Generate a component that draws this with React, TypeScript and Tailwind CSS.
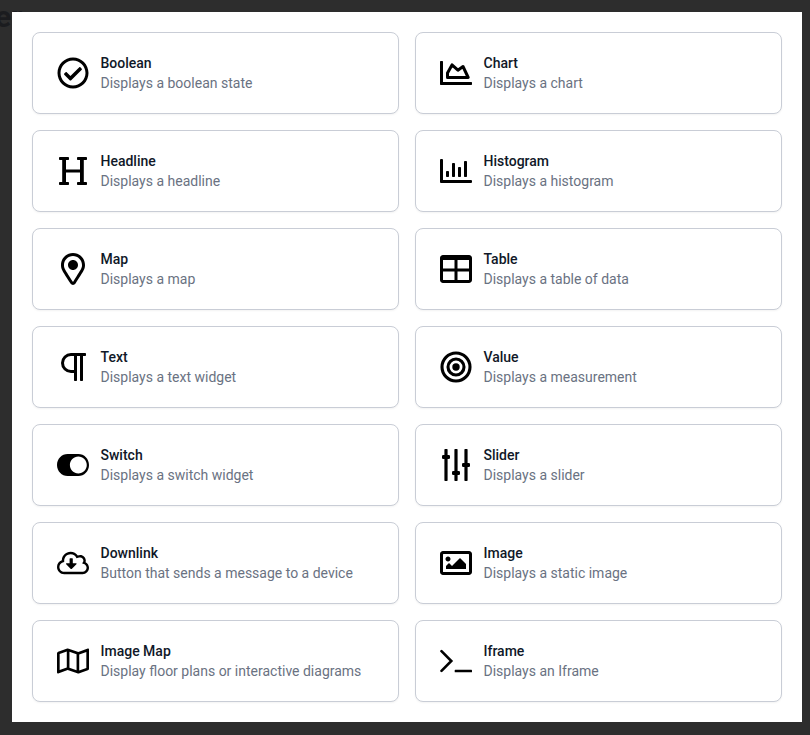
import type { ReactNode } from "react";
import { FaRegCheckCircle, FaRegImage, FaRegMap } from "react-icons/fa";

const Svg = ({ box = "0 0 32 32", children }: { box?: string; children: ReactNode }) => (
  <svg viewBox={box} className="size-8" fill="currentColor">
    {children}
  </svg>
);

const ChartIcon = () => (
  <Svg>
    <path d="M.7 4h1.6a.7.7 0 0 1 .7.7V25h28.3a.7.7 0 0 1 .7.7v1.600a.7.7 0 0 1-.7.7H.7a.7.7 0 0 1-.7-.7V4.700A.7.7 0 0 1 .7 4z" />
    <path d="M7.500 20.500v-4.500L12 7.900l5.900 5.300 5.100-3.700 5.200 11z" fill="none" stroke="currentColor" strokeWidth="3" strokeLinejoin="round" />
  </Svg>
);

const HeadlineIcon = () => (
  <Svg>
    <rect x="2" y="2" width="10" height="3" rx=".8" />
    <rect x="20" y="2" width="10" height="3" rx=".8" />
    <rect x="2" y="27" width="10" height="3" rx=".8" />
    <rect x="20" y="27" width="10" height="3" rx=".8" />
    <path d="M5.200 3H9v11.500h14V3h3.800v26H23V17.500H9V29H5.200z" />
  </Svg>
);

const HistogramIcon = () => (
  <Svg>
    <path d="M1 4h1a1 1 0 0 1 1 1v20h28a1 1 0 0 1 1 1v1a1 1 0 0 1-1 1H1a1 1 0 0 1-1-1V5a1 1 0 0 1 1-1z" />
    <rect x="6" y="16" width="3" height="6" rx=".8" />
    <rect x="12" y="8" width="3" height="14" rx=".8" />
    <rect x="18" y="12" width="3" height="10" rx=".8" />
    <rect x="24" y="6" width="3" height="16" rx=".8" />
  </Svg>
);

const MarkerIcon = () => (
  <Svg box="-64 0 512 512">
    <path d="M192 0C85.903 0 0 86.014 0 192c0 71.117 23.991 93.341 151.271 297.424 18.785 30.119 62.694 30.083 81.457 0C360.075 285.234 384 263.103 384 192 384 85.903 297.986 0 192 0zm0 464C64.576 259.686 48 246.788 48 192c0-79.529 64.471-144 144-144s144 64.471 144 144c0 54.553-15.166 65.425-144 272zm-80-272c0-44.183 35.817-80 80-80s80 35.817 80 80-35.817 80-80 80-80-35.817-80-80z" />
  </Svg>
);

const TableIcon = () => (
  <Svg box="0 0 512 512">
    <path d="M464 32H48C21.490 32 0 53.490 0 80v352c0 26.510 21.490 48 48 48h416c26.510 0 48-21.490 48-48V80c0-26.510-21.490-48-48-48zM232 432H54c-3.300 0-6-2.700-6-6V296h184v136zm0-184H48V112h184v136zm226 184H280V296h184v130c0 3.300-2.700 6-6 6zm6-184H280V112h184v136z" />
  </Svg>
);

const ParagraphIcon = () => (
  <Svg>
    <path d="M28 3.500H14a8.500 8.500 0 0 0 0 17h4.500M18.500 3.500v25.200M24.500 3.500v25.200" fill="none" stroke="currentColor" strokeWidth="3" />
    <rect x="25" y="2" width="4" height="3" rx=".8" />
    <rect x="17" y="26" width="3" height="4" rx=".8" />
    <rect x="23" y="26" width="3" height="4" rx=".8" />
  </Svg>
);

const TargetIcon = () => (
  <Svg>
    <circle cx="16" cy="16" r="14" fill="none" stroke="currentColor" strokeWidth="3.100" />
    <circle cx="16" cy="16" r="8" fill="none" stroke="currentColor" strokeWidth="3.100" />
    <circle cx="16" cy="16" r="3.700" />
  </Svg>
);

const ToggleIcon = () => (
  <Svg box="0 -32 576 576">
    <path fillRule="evenodd" d="M384 58H192C85.961 58 0 146 0 256s86 198 192 198h192c106 0 192-88 192-198S490 58 384 58zm0 350c-83.800 0-152-68.200-152-152 0-83.800 68.200-152 152-152 83.800 0 152 68.200 152 152 0 83.800-68.200 152-152 152z" />
  </Svg>
);

const SlidersIcon = () => (
  <Svg>
    <rect x="4.400" y="0" width="3.200" height="32" rx=".7" />
    <rect x="14.400" y="0" width="3.200" height="32" rx=".7" />
    <rect x="24.400" y="0" width="3.200" height="32" rx=".7" />
    <rect x="2" y="6" width="8" height="4" rx="1.300" />
    <rect x="12" y="22" width="8" height="4" rx="1.300" />
    <rect x="22" y="14" width="8" height="4" rx="1.300" />
  </Svg>
);

const CloudIcon = () => (
  <Svg box="0 -64 640 640">
    <path
      fillRule="evenodd"
      d="M571.700 238.800c2.800-9.900 4.300-20.200 4.300-30.800 0-61.900-50.100-112-112-112-16.700 0-32.900 3.600-48 10.800-31.600-45-84.300-74.800-144-74.800-94.400 0-171.700 74.500-175.800 168.200C39.200 220.200 0 274.300 0 336c0 79.600 64.400 144 144 144h368c70.700 0 128-57.200 128-128 0-47-25.800-90.800-68.300-113.200zM144 432c-53 0-96-43-96-96 0-42.500 27.600-78.600 65.900-91.200L144.600 234C144 225 144 216 144 208c0-70.700 57.300-128 128-128 53.400 0 99.100 32.700 118.300 79.200C407 150 436 144 464 144c35.300 0 64 28.700 64 64 0 20-9 37.500-23 49l7 15c44.200 0 80 35.800 80 80s-35.800 80-80 80z"
    />
    <path d="M262 160h44c6 0 10 4 10 10v92h64c10 0 15 12 8 19l-94 93c-5 5-13 5-18 0l-92-93c-7-7-2-19 8-19h60v-92c0-6 4-10 10-10z" />
  </Svg>
);

const TerminalIcon = () => (
  <Svg>
    <path d="M1.500 6.200 11.300 16 1.500 25.800" fill="none" stroke="currentColor" strokeWidth="2.600" strokeLinecap="round" />
    <rect x="14.700" y="24.800" width="17.300" height="2.500" rx=".6" />
  </Svg>
);

const widgets: { title: string; text: string; icon: ReactNode }[] = [
  { title: "Boolean", text: "Displays a boolean state", icon: <FaRegCheckCircle className="size-8" /> },
  { title: "Chart", text: "Displays a chart", icon: <ChartIcon /> },
  { title: "Headline", text: "Displays a headline", icon: <HeadlineIcon /> },
  { title: "Histogram", text: "Displays a histogram", icon: <HistogramIcon /> },
  { title: "Map", text: "Displays a map", icon: <MarkerIcon /> },
  { title: "Table", text: "Displays a table of data", icon: <TableIcon /> },
  { title: "Text", text: "Displays a text widget", icon: <ParagraphIcon /> },
  { title: "Value", text: "Displays a measurement", icon: <TargetIcon /> },
  { title: "Switch", text: "Displays a switch widget", icon: <ToggleIcon /> },
  { title: "Slider", text: "Displays a slider", icon: <SlidersIcon /> },
  { title: "Downlink", text: "Button that sends a message to a device", icon: <CloudIcon /> },
  { title: "Image", text: "Displays a static image", icon: <FaRegImage className="size-8" /> },
  { title: "Image Map", text: "Display floor plans or interactive diagrams", icon: <FaRegMap className="size-8" /> },
  { title: "Iframe", text: "Displays an Iframe", icon: <TerminalIcon /> },
];

export default function App() {
  return (
    <div className="relative h-[735px] w-[810px] overflow-hidden bg-[#2d2d2d] pt-3 pl-3 font-['Roboto',sans-serif]">
      <span className="absolute -top-px -left-[5px] text-3xl leading-9 font-bold text-[#1b1c1f]">er</span>
      <main className="relative h-[710px] w-[790px] bg-white p-5">
        <div className="grid grid-cols-2 gap-4">
          {widgets.map((w) => (
            <button
              key={w.title}
              className="flex items-center gap-[11.5px] rounded-lg border border-[#c9cdd6] bg-white px-6 py-5 text-left shadow-xs"
            >
              <span className="shrink-0 text-black">{w.icon}</span>
              <span className="flex flex-col text-sm leading-5">
                <span className="font-medium text-gray-900">{w.title}</span>
                <span className="text-gray-500">{w.text}</span>
              </span>
            </button>
          ))}
        </div>
      </main>
    </div>
  );
}
